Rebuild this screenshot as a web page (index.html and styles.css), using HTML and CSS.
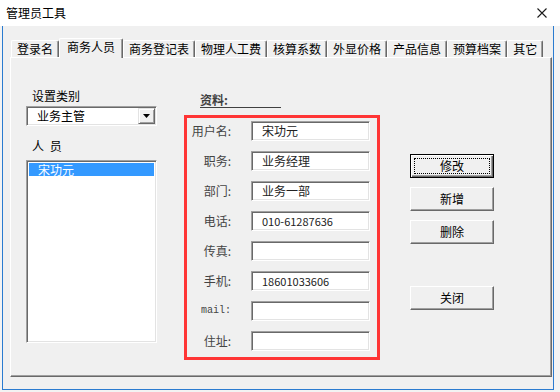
FILE: index.html
```html
<!DOCTYPE html>
<html lang="zh-CN">
<head>
<meta charset="utf-8">
<title>管理员工具</title>
<link rel="stylesheet" href="styles.css">
</head>
<body>
<div class="screen">
  <header class="titlebar">
    <span class="title">管理员工具</span>
    <svg class="close" width="10" height="10" viewBox="0 0 10 10"><path d="M0.5 0.5 L9.5 9.5 M9.5 0.5 L0.5 9.5" stroke="#1a1a1a" stroke-width="1.1" fill="none"/></svg>
  </header>
  <div class="window">
    <nav class="tabs">
      <div class="tab">登录名</div>
      <div class="tab active">商务人员</div>
      <div class="tab">商务登记表</div>
      <div class="tab">物理人工费</div>
      <div class="tab">核算系数</div>
      <div class="tab">外显价格</div>
      <div class="tab">产品信息</div>
      <div class="tab">预算档案</div>
      <div class="tab">其它</div>
    </nav>
    <section class="panel">
      <div class="col-left">
        <div class="lbl">设置类别</div>
        <div class="combo">
          <span class="combo-text">业务主管</span>
          <span class="combo-btn"><svg width="7" height="4" viewBox="0 0 7 4"><path d="M0 0 H7 L3.5 4 Z" fill="#000"/></svg></span>
        </div>
        <div class="lbl lbl-people">人 员</div>
        <div class="listbox">
          <div class="list-item selected">宋功元</div>
        </div>
      </div>
      <div class="col-mid">
        <div class="heading"><span class="heading-text">资料:</span></div>
        <div class="redbox">
          <label class="flabel">用户名:</label><div class="field">宋功元</div>
          <label class="flabel">职务:</label><div class="field">业务经理</div>
          <label class="flabel">部门:</label><div class="field">业务一部</div>
          <label class="flabel">电话:</label><div class="field num">010-61287636</div>
          <label class="flabel">传真:</label><div class="field"></div>
          <label class="flabel">手机:</label><div class="field num">18601033606</div>
          <label class="flabel mono">mail:</label><div class="field"></div>
          <label class="flabel">住址:</label><div class="field"></div>
        </div>
      </div>
      <div class="col-right">
        <button class="btn default"><span>修改</span></button>
        <button class="btn">新增</button>
        <button class="btn">删除</button>
        <button class="btn btn-close">关闭</button>
      </div>
    </section>
  </div>
</div>
</body>
</html>
```

FILE: styles.css
```css
html, body {
  margin: 0;
  padding: 0;
}
body {
  width: 560px;
  height: 392px;
  overflow: hidden;
  background: #f3f3f3;
  font-family: "Noto Sans CJK SC", "Liberation Sans", sans-serif;
  font-size: 12px;
  color: #000;
}
.screen {
  width: 560px;
  height: 392px;
  display: flex;
  flex-direction: column;
}
.titlebar {
  height: 26px;
  flex: none;
  background: #fff;
  display: flex;
  align-items: center;
  justify-content: space-between;
  padding: 0 13px 0 6px;
  box-sizing: border-box;
}
.title {
  font-size: 12px;
  line-height: 26px;
  color: #000;
}
.close {
  display: block;
}
.window {
  margin-left: 2px;
  width: 552px;
  height: 364px;
  box-sizing: border-box;
  border: 1px solid #2a7bd0;
  border-top: none;
  background: #f0f0f0;
  padding: 12px 0 0 7px;
}
.tabs {
  display: flex;
  align-items: flex-end;
  height: 19px;
  padding-left: 1px;
  position: relative;
  z-index: 1;
}
.tab {
  height: 17px;
  box-sizing: border-box;
  padding: 0 5px;
  border: 1px solid;
  border-color: #fff #696969 transparent #fff;
  border-bottom: none;
  border-radius: 2px 2px 0 0;
  box-shadow: inset -1px 0 #a0a0a0;
  line-height: 15px;
  white-space: nowrap;
  background: #f0f0f0;
}
.tab.active {
  height: 20px;
  margin-bottom: -1px;
  padding: 0 7px;
  line-height: 16px;
  position: relative;
  z-index: 2;
}
.panel {
  width: 542px;
  height: 320px;
  box-sizing: border-box;
  border: 1px solid;
  border-color: #fff #696969 #696969 #fff;
  box-shadow: inset -1px -1px #a0a0a0;
  padding-left: 15px;
  display: flex;
  align-items: flex-start;
}
.col-left {
  width: 131px;
  padding-top: 30px;
  display: flex;
  flex-direction: column;
}
.lbl {
  line-height: 16px;
  padding-left: 6px;
  color: #000;
}
.lbl-people {
  margin-top: 12px;
  word-spacing: 3px;
}
.combo {
  margin-top: 2px;
  height: 20px;
  box-sizing: border-box;
  border: 1px solid;
  border-color: #a0a0a0 #fff #fff #a0a0a0;
  box-shadow: inset 1px 1px #696969, inset -1px -1px #e3e3e3;
  background: #fff;
  display: flex;
  align-items: center;
  padding: 1px 1px 1px 1px;
}
.combo-text {
  flex: 1;
  padding-left: 9px;
  line-height: 16px;
}
.combo-btn {
  width: 17px;
  height: 16px;
  box-sizing: border-box;
  border: 1px solid;
  border-color: #e3e3e3 #696969 #696969 #e3e3e3;
  box-shadow: inset 1px 1px #fff, inset -1px -1px #a0a0a0;
  background: #f0f0f0;
  display: flex;
  align-items: center;
  justify-content: center;
}
.combo-btn svg {
  display: block;
}
.listbox {
  margin-top: 6px;
  height: 183px;
  box-sizing: border-box;
  border: 1px solid;
  border-color: #a0a0a0 #fff #fff #a0a0a0;
  box-shadow: inset 1px 1px #696969, inset -1px -1px #e3e3e3;
  background: #fff;
  padding: 2px 2px 0 2px;
}
.list-item {
  height: 13px;
  line-height: 13px;
  padding-left: 9px;
}
.list-item.selected {
  background: #3399ff;
  color: #fff;
}
.col-mid {
  width: 196px;
  margin-left: 27px;
  padding-top: 33px;
  display: flex;
  flex-direction: column;
}
.heading {
  padding-left: 16px;
  height: 15px;
}
.heading-text {
  display: inline-block;
  width: 81px;
  line-height: 14px;
  border-bottom: 1px solid #404040;
  font-weight: bold;
  color: #404040;
}
.redbox {
  margin-top: 9px;
  width: 196px;
  height: 245px;
  box-sizing: border-box;
  border: 3px solid #ff3535;
  padding-top: 3px;
  display: grid;
  grid-template-columns: 47px 119px;
  grid-auto-rows: 20px;
  column-gap: 17px;
  row-gap: 10px;
}
.flabel {
  text-align: right;
  line-height: 20px;
  padding-right: 3px;
  color: #444;
  white-space: nowrap;
}
.flabel.mono {
  font-family: "Liberation Mono", "DejaVu Sans Mono", monospace;
  font-size: 10px;
}
.field {
  height: 20px;
  box-sizing: border-box;
  border: 1px solid;
  border-color: #a0a0a0 #fff #fff #a0a0a0;
  box-shadow: inset 1px 1px #696969, inset -1px -1px #e3e3e3;
  background: #fff;
  padding-left: 10px;
  line-height: 18px;
  color: #222;
}
.field.num {
  font-size: 11px;
}
.col-right {
  width: 84px;
  margin-left: 30px;
  padding-top: 96px;
  display: flex;
  flex-direction: column;
  gap: 9px;
}
.btn {
  width: 84px;
  height: 24px;
  box-sizing: border-box;
  margin: 0;
  padding: 0;
  border: 1px solid;
  border-color: #fff #696969 #696969 #fff;
  box-shadow: inset -1px -1px #a0a0a0, inset 1px 1px #f0f0f0;
  background: #f0f0f0;
  font-family: "Noto Sans CJK SC", sans-serif;
  font-size: 12px;
  line-height: 22px;
  color: #000;
  text-align: center;
}
.btn.default {
  border-color: #000;
  box-shadow: inset 1px 1px #fff, inset -1px -1px #696969, inset -2px -2px #a0a0a0;
  position: relative;
}
.btn.default::after {
  content: "";
  position: absolute;
  left: 3px;
  top: 3px;
  right: 3px;
  bottom: 3px;
  border: 1px dotted #000;
}
.btn-close {
  margin-top: 33px;
}
```
